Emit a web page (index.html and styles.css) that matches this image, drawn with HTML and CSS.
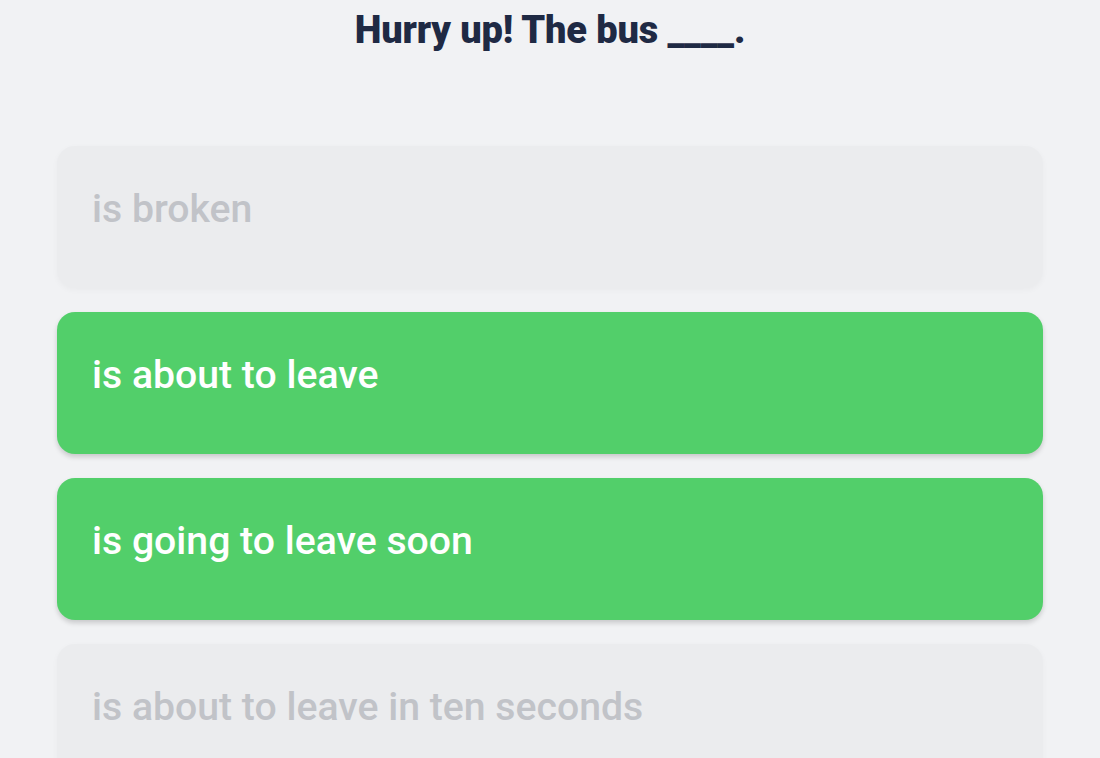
FILE: index.html
```html
<!DOCTYPE html>
<html lang="en">
<head>
<meta charset="utf-8">
<link rel="stylesheet" href="styles.css">
</head>
<body>
<main class="quiz">
  <h1 class="question">Hurry up! The bus ____.</h1>
  <div class="options">
    <div class="option option--off">is broken</div>
    <div class="option option--on">is about to leave</div>
    <div class="option option--on">is going to leave soon</div>
    <div class="option option--off">is about to leave in ten seconds</div>
  </div>
</main>
</body>
</html>
```
FILE: styles.css
```css
html, body {
  margin: 0;
  padding: 0;
  background: #f1f2f4;
  height: 100%;
  overflow: hidden;
}
body {
  font-family: Roboto, "Noto Sans", sans-serif;
}
.quiz {
  padding: 2px 57px 0;
}
.question {
  margin: 0;
  text-align: center;
  font-size: 38px;
  line-height: 56px;
  font-weight: 900;
  color: #1f2a44;
  letter-spacing: -0.15px;
}
.options {
  margin-top: 88px;
  display: flex;
  flex-direction: column;
  gap: 24px;
}
.option {
  height: 142px;
  border-radius: 18px;
  padding: 0 35px 16px;
  display: flex;
  align-items: center;
  font-size: 39.2px;
  font-weight: 500;
  box-sizing: border-box;
}
.option--off {
  background: #ebecee;
  color: #c1c3c8;
  box-shadow: 0 2px 6px rgba(0, 0, 0, 0.035);
}
.option--on {
  background: #52cf6a;
  color: #ffffff;
  box-shadow: 0 3px 5px rgba(0, 0, 0, 0.17);
}
```
